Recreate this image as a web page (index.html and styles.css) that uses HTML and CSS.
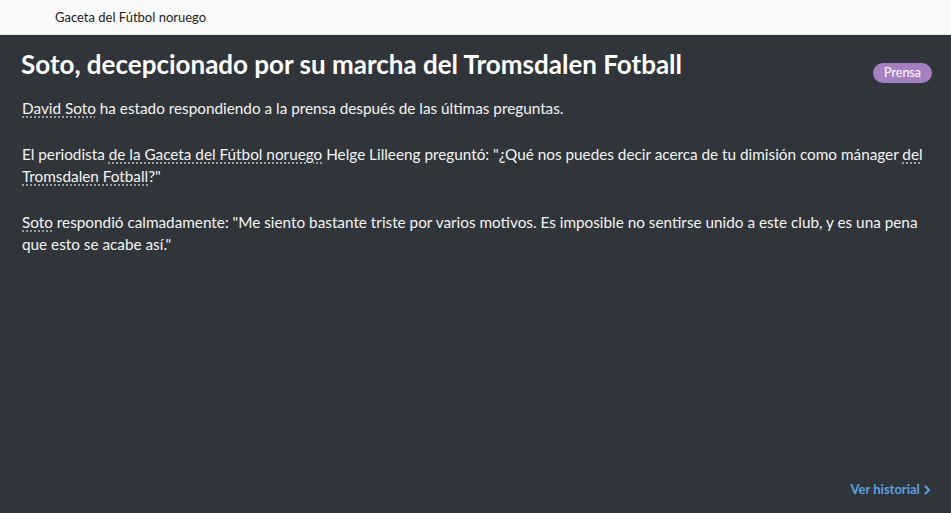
FILE: index.html
```html
<!DOCTYPE html>
<html lang="es">
<head>
  <meta charset="UTF-8">
  <title>Gaceta del Fútbol noruego</title>
  <link rel="stylesheet" href="styles.css">
</head>
<body>

<div class="topbar">Gaceta del Fútbol noruego</div>

<div class="article">
  <div class="article-head">
    <h1>Soto, decepcionado por su marcha del Tromsdalen Fotball</h1>
    <span class="tag">Prensa</span>
  </div>

  <div class="article-body">
    <p><span class="link">David Soto</span> ha estado respondiendo a la prensa después de las últimas preguntas.</p>
    <p>El periodista <span class="link">de la Gaceta del Fútbol noruego</span> Helge Lilleeng preguntó: "¿Qué nos puedes decir acerca de tu dimisión como mánager <span class="link">del</span> <span class="link">Tromsdalen Fotball</span>?"</p>
    <p><span class="link">Soto</span> respondió calmadamente: "Me siento bastante triste por varios motivos. Es imposible no sentirse unido a este club, y es una pena que esto se acabe así."</p>
  </div>

  <div class="article-foot">
    <a class="history">Ver historial
      <svg width="8" height="10" viewBox="0 0 8 10"><path d="M2 1l4 4-4 4" fill="none" stroke="currentColor" stroke-width="2"/></svg>
    </a>
  </div>
</div>

</body>
</html>
```

FILE: styles.css
```css
html, body {
  height: 100%;
}
body {
  margin: 0;
  font-family: 'Lato', 'Noto Sans', sans-serif;
  background-color: #30343b;
  display: flex;
  flex-direction: column;
}
.topbar {
  height: 34px;
  background-color: #f9f9f9;
  color: #222;
  font-size: 13px;
  line-height: 34px;
  padding-left: 55px;
  border-bottom: 1px solid #e4e4e4;
}
.article {
  flex: 1;
  display: flex;
  flex-direction: column;
  padding: 0 20px 16px 22px;
  color: #f4f4f4;
}
.article-head {
  display: flex;
  justify-content: space-between;
  align-items: flex-start;
}
h1 {
  margin: 13px 0 0 -1px;
  font-size: 26px;
  font-weight: 700;
  color: #ffffff;
  line-height: 32px;
}
.tag {
  margin-top: 28px;
  margin-right: -1px;
  background-color: #a57fc0;
  color: #fff;
  font-size: 12.5px;
  line-height: 20px;
  padding: 0 11px;
  border-radius: 10px;
}
.article-body {
  flex: 1;
  padding-top: 14px;
}
.article-body p {
  margin: 0 0 24px;
  font-size: 15.3px;
  line-height: 22px;
}
.link {
  text-decoration: underline dotted #b8bcc2;
  text-underline-offset: 3px;
}
.article-foot {
  text-align: right;
}
.history {
  color: #5aa3e0;
  font-size: 13px;
  font-weight: 700;
  cursor: pointer;
}
.history svg {
  vertical-align: -1px;
}
```
